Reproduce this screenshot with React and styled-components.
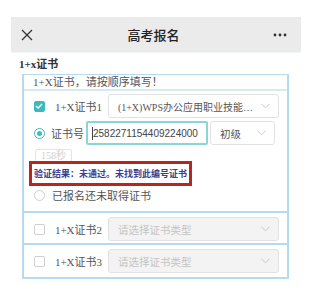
import React from 'react';
import styled, { createGlobalStyle } from 'styled-components';

const GlobalStyle = createGlobalStyle`
  body {
    margin: 0;
    background: #fff;
    font-family: "Liberation Serif", "Noto Sans CJK SC", serif;
    color: #555;
  }
`;

const Page = styled.div`
  width: 313px;
  height: 291px;
  padding: 17px 12px 0 11px;
  box-sizing: border-box;
  overflow: hidden;
`;

const Header = styled.div`
  height: 35px;
  background: #ebebeb;
  display: flex;
  align-items: center;
  justify-content: space-between;
  padding: 0 14px 0 9px;
  border-bottom: 1px solid #eef6fa;
`;

const Title = styled.div`
  font-family: "Noto Sans CJK SC", sans-serif;
  font-size: 13px;
  font-weight: 500;
  color: #222;
`;

const IconButton = styled.div`
  width: 14px;
  display: flex;
  align-items: center;
  justify-content: center;
  color: #333;
`;

const SectionLabel = styled.div`
  font-size: 11px;
  font-weight: bold;
  color: #333;
  padding: 2px 0 0 8px;
  height: 21px;
  box-sizing: border-box;
`;

const Outer = styled.div`
  margin-left: 11px;
  width: 267px;
  box-sizing: border-box;
  border: 2px solid #b7dbee;
  border-top-width: 1px;
`;

const Hint = styled.div`
  height: 14px;
  line-height: 14px;
  font-size: 11px;
  color: #555;
  padding-left: 9px;
  border-bottom: 2px solid #d4ebf2;
`;

const Block = styled.div`
  padding: 2px 8px 0 8px;
  height: ${p => p.$h}px;
  box-sizing: border-box;
  border-bottom: ${p => (p.$last ? 'none' : '2px solid #b7dbee')};
`;

const Row = styled.div`
  display: flex;
  align-items: center;
  height: ${p => p.$h || 24}px;
  margin-top: ${p => p.$mt || 0}px;
`;

const Check = styled.div`
  width: 11px;
  height: 11px;
  box-sizing: border-box;
  border-radius: 2px;
  margin-left: 2px;
  background: ${p => (p.$on ? '#3fb9bd' : '#fff')};
  border: 1px solid ${p => (p.$on ? '#3fb9bd' : '#cfcfcf')};
  display: flex;
  align-items: center;
  justify-content: center;
`;

const Radio = styled.div`
  width: 11px;
  height: 11px;
  box-sizing: border-box;
  border-radius: 50%;
  margin-left: 2px;
  border: 1px solid ${p => (p.$on ? '#3fb9bd' : '#cfcfcf')};
  display: flex;
  align-items: center;
  justify-content: center;
  &::after {
    content: '';
    display: ${p => (p.$on ? 'block' : 'none')};
    width: 5px;
    height: 5px;
    border-radius: 50%;
    background: #3fb9bd;
  }
`;

const Label = styled.span`
  font-size: 11px;
  color: #555;
  margin-left: ${p => p.$ml || 10}px;
  width: ${p => p.$w || 'auto'};
  white-space: nowrap;
  flex-shrink: 0;
`;

const Select = styled.div`
  height: 24px;
  width: ${p => p.$w}px;
  margin-left: ${p => p.$ml || 0}px;
  box-sizing: border-box;
  border: 1px solid #e2e2e2;
  border-radius: 3px;
  background: ${p => (p.$disabled ? '#f3f3f3' : '#fff')};
  display: flex;
  align-items: center;
  justify-content: space-between;
  gap: 4px;
  padding: 0 8px 0 9px;
  font-size: 10.5px;
  color: ${p => (p.$disabled ? '#c4c4c4' : '#555')};
  white-space: nowrap;
  overflow: hidden;
`;

const SelectText = styled.span`
  overflow: hidden;
  font-size: 10px;
`;

const Input = styled.div`
  height: 24px;
  width: 122px;
  margin-left: 2px;
  box-sizing: border-box;
  border: 2px solid #8dd4d6;
  border-radius: 2px;
  display: flex;
  align-items: center;
  padding-left: 4px;
  font-family: "Liberation Sans", "Noto Sans CJK SC", sans-serif;
  font-size: 10px;
  color: #444;
  white-space: nowrap;
  overflow: hidden;
  &::before {
    content: '';
    width: 1px;
    height: 13px;
    background: #444;
  }
`;

const TimerButton = styled.div`
  width: 37px;
  height: 14px;
  margin: 4px 0 0 3px;
  box-sizing: border-box;
  border: 1px solid #e4e4e4;
  border-radius: 2px;
  font-size: 10px;
  line-height: 12px;
  color: #d0d0d0;
  text-align: center;
`;

const ResultBox = styled.div`
  width: 163px;
  height: 25px;
  margin: -2px 0 0 -3px;
  box-sizing: border-box;
  border: 3px solid #b5271f;
  display: flex;
  align-items: center;
  padding-left: 2px;
  font-size: 9px;
  font-weight: bold;
  color: #3b3d8e;
  white-space: nowrap;
`;

const Chevron = () => (
  <svg width="9" height="6" viewBox="0 0 9 6" fill="none" style={{ flexShrink: 0 }}>
    <path d="M0.5 0.8 L4.5 4.8 L8.5 0.8" stroke="#c8c8c8" strokeWidth="1" />
  </svg>
);

const App = () => {
  const others = [2, 3];
  return (
    <Page>
      <GlobalStyle />
      <Header>
        <IconButton>
          <svg width="12" height="12" viewBox="0 0 12 12">
            <path d="M1 1 L11 11 M11 1 L1 11" stroke="#333" strokeWidth="1.3" />
          </svg>
        </IconButton>
        <Title>高考报名</Title>
        <IconButton>
          <svg width="14" height="4" viewBox="0 0 14 4">
            <circle cx="2" cy="2" r="1.4" fill="#333" />
            <circle cx="7" cy="2" r="1.4" fill="#333" />
            <circle cx="12" cy="2" r="1.4" fill="#333" />
          </svg>
        </IconButton>
      </Header>
      <SectionLabel>1+x证书</SectionLabel>
      <Outer>
        <Hint>1+X证书，请按顺序填写！</Hint>
        <Block $h={122}>
          <Row $h={24} $mt={1}>
            <Check $on>
              <svg width="8" height="6" viewBox="0 0 8 6">
                <path d="M1 3 L3.2 5 L7 1" stroke="#fff" strokeWidth="1.4" fill="none" />
              </svg>
            </Check>
            <Label $w="44px">1+X证书1</Label>
            <Select $w={173} $ml={9}>
              <SelectText>(1+X)WPS办公应用职业技能…</SelectText>
              <Chevron />
            </Select>
          </Row>
          <Row $h={24} $mt={3}>
            <Radio $on />
            <Label $ml={6}>证书号</Label>
            <Input>2582271154409224000</Input>
            <Select $w={65} $ml={2}>
              <span>初级</span>
              <Chevron />
            </Select>
          </Row>
          <TimerButton>158秒</TimerButton>
          <ResultBox>验证结果：未通过。未找到此编号证书</ResultBox>
          <Row $h={18}>
            <Radio />
            <Label $ml={7}>已报名还未取得证书</Label>
          </Row>
        </Block>
        {others.map((n, i) => (
          <Block key={n} $h={32} $last={i === others.length - 1}>
            <Row $h={24} $mt={2}>
              <Check />
              <Label $w="44px">1+X证书{n}</Label>
              <Select $w={173} $ml={9} $disabled>
                <span>请选择证书类型</span>
                <Chevron />
              </Select>
            </Row>
          </Block>
        ))}
      </Outer>
    </Page>
  );
};

export default App;
